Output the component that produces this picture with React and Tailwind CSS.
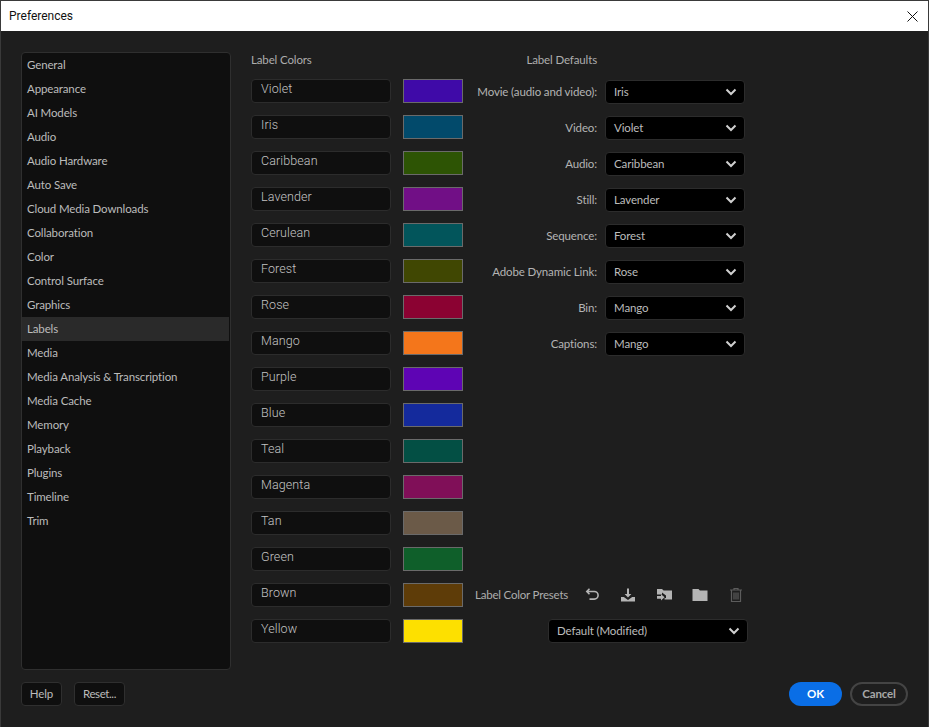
const font = { fontFamily: 'Lato, "Open Sans", sans-serif' };
const nav = ["General","Appearance","AI Models","Audio","Audio Hardware","Auto Save","Cloud Media Downloads","Collaboration","Color","Control Surface","Graphics","Labels","Media","Media Analysis & Transcription","Media Cache","Memory","Playback","Plugins","Timeline","Trim"];
const colors = [["Violet","#3f0aa8"],["Iris","#024a6b"],["Caribbean","#2d5404"],["Lavender","#710f86"],["Cerulean","#02555b"],["Forest","#404702"],["Rose","#8b0232"],["Mango","#f4761b"],["Purple","#5e04b4"],["Blue","#142a9c"],["Teal","#034f44"],["Magenta","#800f58"],["Tan","#6b5a48"],["Green","#0f5f2a"],["Brown","#5e3c08"],["Yellow","#fde000"]];
const defaults = [["Movie (audio and video):","Iris"],["Video:","Violet"],["Audio:","Caribbean"],["Still:","Lavender"],["Sequence:","Forest"],["Adobe Dynamic Link:","Rose"],["Bin:","Mango"],["Captions:","Mango"]];

function Chevron() {
  return <svg width="12" height="8" viewBox="0 0 12 8" fill="none" stroke="#d0d0d0" strokeWidth="2"><path d="M1.5 1.5 6 6l4.5-4.5" /></svg>;
}
function Select({ value, className }) {
  return (
    <div className={"h-6 rounded-[4px] bg-black border border-[#2c2c2c] flex items-center justify-between pl-2 pr-[7px] text-[#bcbcbc] " + className}>
      <span>{value}</span><Chevron />
    </div>
  );
}
export default function App() {
  return (
    <div style={font} className="w-[929px] h-[727px] bg-[#1e1e1e] flex flex-col border border-[#3a3a3a] border-b-0 overflow-hidden text-[11.500px] tracking-[-0.13px]">
      <div style={{ fontFamily: "Roboto, sans-serif" }} className="h-[30px] shrink-0 bg-white flex items-center justify-between pl-2 pr-[10px] text-[12px] tracking-normal text-[#111]">
        <span>Preferences</span>
        <svg width="11" height="11" viewBox="0 0 11 11" stroke="#111" strokeWidth="1"><path d="M.5.5l10 10M10.5.5l-10 10" /></svg>
      </div>
      <div className="flex-1 flex pl-5 pt-[21px]">
        <div className="w-[210px] h-[618px] bg-[#0f0f0f] border border-[#2f2f2f] rounded-[4px] text-[#bcbcbc]">
          {nav.map(n => (
            <div key={n} className={"h-6 flex items-center pl-[5px] " + (n === "Labels" ? "bg-[#2a2a2a] mr-[1px]" : "")}>{n}</div>
          ))}
        </div>
        <div className="w-[212px] ml-5 flex flex-col">
          <div className="h-[16px] text-[#adadad] flex items-center">Label Colors</div>
          <div className="mt-[11px] flex flex-col gap-3">
            {colors.map(([n, c]) => (
              <div key={n} className="flex gap-3 h-6">
                <div style={{ fontFamily: "Roboto, sans-serif" }} className="w-[140px] bg-[#0f0f0f] border border-[#2c2c2c] rounded-[4px] pl-[9px] pt-[1px] text-[12.500px] font-light tracking-[0.1px] text-[#c4c4c4] leading-[15px]">{n}</div>
                <div style={{ backgroundColor: c }} className="w-[60px] border border-[#6a6a6a]"></div>
              </div>
            ))}
          </div>
        </div>
        <div className="w-[282px] ml-3 flex flex-col pb-[28px]">
          <div className="w-[122px] h-[16px] text-right text-[#adadad] flex items-center justify-end">Label Defaults</div>
          <div className="mt-3 flex flex-col gap-3">
            {defaults.map(([l, v]) => (
              <div key={l} className="flex items-center h-6">
                <div className="w-[122px] whitespace-nowrap flex justify-end text-[#b4b4b4]">{l}</div>
                <Select value={v} className="w-[140px] ml-2" />
              </div>
            ))}
          </div>
          <div className="flex-1"></div>
          <div className="flex items-center mb-3 h-6 text-[#adadad]">
            <span className="w-[108px] whitespace-nowrap tracking-[-0.2px]">Label Color Presets</span>
            <div className="flex gap-[18px] items-center">
              <svg width="18" height="18" viewBox="0 0 18 18" fill="none" stroke="#b4b4b4" strokeWidth="1.6"><path d="M6.500 1.800 3.800 4.500l2.700 2.700M4 4.500h7.300a3.800 3.800 0 0 1 0 7.600H6.500" transform="translate(0 1)" /></svg>
              <svg width="18" height="18" viewBox="0 0 18 18"><path fill="#b4b4b4" d="M8 2.500h2V8h2.400L9 11.600 5.600 8H8zM2 11h2.800L9 14l4.200-3H16v4.500H2z" /></svg>
              <svg width="18" height="18" viewBox="0 0 18 18"><path fill="#b4b4b4" d="M2 3h5l1.600 1.600H17v9H9.500v-1.400l1.500-.2V9.600L7 6.400v2.200H2z" /><path fill="#b4b4b4" d="M2 10h4V8.300l3.600 3-3.600 3.100v-1.700H2z" /></svg>
              <svg width="18" height="18" viewBox="0 0 18 18"><path fill="#b4b4b4" d="M1.500 3h6l1.400 1.600H16.500V15h-15z" /></svg>
              <svg width="18" height="18" viewBox="0 0 18 18" fill="none" stroke="#5c5c5c" strokeWidth="1.2"><path d="M3 4h12M7 4V2.500h4V4M4.500 4v11.500h9V4M7 6.500v7M9 6.500v7M11 6.500v7" /></svg>
            </div>
          </div>
          <div className="pl-[73px]"><Select value="Default (Modified)" className="w-[200px]" /></div>
        </div>
      </div>
      <div className="h-[56px] shrink-0 flex items-start justify-between pl-5 pr-5 pt-[11px]">
        <div className="flex gap-3">
          <div className="h-6 w-[41px] bg-[#0f0f0f] border border-[#2f2f2f] rounded-[4px] flex items-center justify-center text-[#bcbcbc]">Help</div>
          <div className="h-6 w-[51px] bg-[#0f0f0f] border border-[#2f2f2f] rounded-[4px] flex items-center justify-center text-[#bcbcbc] tracking-[-0.4px]">Reset...</div>
        </div>
        <div className="flex gap-2">
          <div className="h-6 w-[53px] rounded-full bg-[#0a6ee6] flex items-center justify-center text-white font-bold">OK</div>
          <div className="h-6 w-[58px] rounded-full border-2 border-[#444] flex items-center justify-center text-[#a8a8a8] font-bold">Cancel</div>
        </div>
      </div>
    </div>
  );
}
